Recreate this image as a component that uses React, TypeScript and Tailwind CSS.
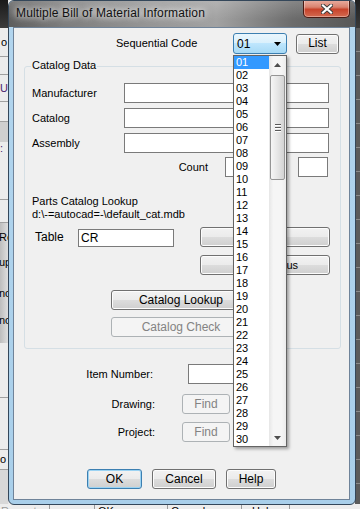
import React from "react";

const btnNormal =
  "border-[#707070] bg-[linear-gradient(#f2f2f2_0%,#ebebeb_50%,#dddddd_50%,#cfcfcf_100%)] shadow-[inset_0_0_0_1px_#fcfcfc] text-black";
const btnDefault =
  "border-[#3c7fb1] bg-[linear-gradient(#f2f2f2_0%,#ebebeb_50%,#dddddd_50%,#cfcfcf_100%)] shadow-[inset_0_0_0_1px_#9bd3f3] text-black";
const btnDisabled = "border-[#adb2b5] bg-[#f4f4f4] text-[#838383]";

function Btn({
  children,
  className = "",
  kind = "normal",
}: {
  children?: React.ReactNode;
  className?: string;
  kind?: "normal" | "default" | "disabled";
}) {
  const k = kind === "disabled" ? btnDisabled : kind === "default" ? btnDefault : btnNormal;
  return (
    <div className={`flex shrink-0 items-center justify-center rounded-[3px] border leading-[13px] ${k} ${className}`}>
      {children}
    </div>
  );
}

function TextBox({ className = "", children }: { className?: string; children?: React.ReactNode }) {
  return (
    <div className={`flex shrink-0 items-center border border-[#7a7a7a] bg-white pl-[2px] text-[12px] leading-[14px] ${className}`}>
      {children}
    </div>
  );
}

function LeftStrip() {
  return (
    <div className="absolute left-0 top-0 flex h-[509px] w-[8px] flex-col overflow-hidden bg-[#ececec] text-[11px] leading-[13px]">
      <div className="h-[28px] shrink-0 bg-[linear-gradient(#1a1a1a,#3c3c3c)]" />
      <div className="flex h-[29px] shrink-0 items-center border-b border-[#a0a0a0] pl-[1px]">o</div>
      <div className="h-[18px] shrink-0 border-b border-[#a0a0a0]" />
      <div className="flex h-[27px] shrink-0 items-center border-b border-[#a0a0a0] text-[#4b1f6f]">U</div>
      <div className="h-[20px] shrink-0 border-b border-[#a0a0a0]" />
      <div className="h-[20px] shrink-0 bg-[#cfcfcf]" />
      <div className="h-[58px] shrink-0 border-b border-[#a0a0a0] text-[#4b1f6f]">:</div>
      <div className="h-[23px] shrink-0 border-b border-[#a0a0a0]" />
      <div className="flex h-[120px] shrink-0 flex-col bg-[linear-gradient(90deg,#bdbdbd,#dedede)] text-black">
        <div className="mt-[8px] -ml-[1px] leading-[13px]">Re</div>
        <div className="mt-[12px] -ml-[1px] leading-[13px]">up</div>
        <div className="mt-[18px] -ml-[1px] leading-[13px]">nc</div>
        <div className="mt-[14px] -ml-[1px] leading-[13px]">nc</div>
      </div>
      <div className="h-[55px] shrink-0 border-b border-[#a0a0a0]" />
      <div className="h-[52px] shrink-0 border-b border-[#a0a0a0]" />
      <div className="flex h-[20px] shrink-0 items-center border-b border-[#a0a0a0]">o</div>
      <div className="flex-1 bg-[#d8d8d8]" />
    </div>
  );
}

function RightStrip() {
  return (
    <div className="absolute right-0 top-0 flex h-[509px] w-[5px] flex-col overflow-hidden">
      <div className="h-[28px] shrink-0 bg-[linear-gradient(#202020,#3a3a3a)]" />
      <div className="flex-1 bg-[repeating-linear-gradient(180deg,#5b5b5b_0px,#5b5b5b_23px,#8a8a8a_23px,#8a8a8a_24px)]" />
    </div>
  );
}

function BottomStrip() {
  return (
    <div className="absolute bottom-0 left-0 flex h-[5px] w-[360px] overflow-hidden bg-[#ededed] text-[11px] leading-[13px]">
      <div className="w-[50px] shrink-0 border-r border-[#9a9a9a] pl-[1px] pt-[1px] text-[#9a9a9a]">Repeat</div>
      <div className="w-[45px] shrink-0 border-r border-[#9a9a9a]" />
      <div className="w-[73px] shrink-0 border-r border-[#9a9a9a] pl-[3px] pt-[1px]">OK</div>
      <div className="w-[74px] shrink-0 border-r border-[#9a9a9a] pl-[3px] pt-[1px]">Cancel</div>
      <div className="w-[48px] shrink-0 border-r border-[#9a9a9a] pl-[10px] pt-[1px]">Help</div>
      <div className="flex-1" />
    </div>
  );
}

function DropList() {
  const rows = Array.from({ length: 30 }, (_, i) => String(i + 1).padStart(2, "0"));
  return (
    <div className="absolute left-[219px] top-[27px] z-10 flex h-[392px] w-[54px] border border-[#646464] bg-white shadow-[2px_2px_3px_rgba(0,0,0,0.35)]">
      <div className="flex w-[35px] shrink-0 flex-col">
        {rows.map((r, i) => (
          <div
            key={r}
            className={`h-[13px] shrink-0 pl-[2px] text-[11px] leading-[13px] ${i === 0 ? "bg-[#3399ff] text-white" : "text-black"}`}
          >
            {r}
          </div>
        ))}
      </div>
      <div className="flex w-[17px] shrink-0 flex-col bg-[linear-gradient(90deg,#e6e6e6,#f5f5f5_25%,#f5f5f5_75%,#ebebeb)]">
        <div className="flex h-[17px] shrink-0 items-center justify-center">
          <svg width="7" height="4" viewBox="0 0 7 4">
            <polygon points="0,4 7,4 3.5,0" fill="#4d4d4d" />
          </svg>
        </div>
        <div className="ml-[1px] mt-[2px] flex h-[105px] w-[15px] shrink-0 flex-col items-center justify-center gap-[1px] rounded-[2px] border border-[#959595] bg-[linear-gradient(90deg,#f6f6f6,#e6e6e6_50%,#d3d3d3)]">
          <div className="h-[1px] w-[6px] bg-[#5a5a5a] shadow-[0_1px_0_#ffffff]" />
          <div className="mt-[1px] h-[1px] w-[6px] bg-[#5a5a5a] shadow-[0_1px_0_#ffffff]" />
          <div className="mt-[1px] h-[1px] w-[6px] bg-[#5a5a5a] shadow-[0_1px_0_#ffffff]" />
        </div>
        <div className="flex-1" />
        <div className="flex h-[17px] shrink-0 items-center justify-center">
          <svg width="7" height="4" viewBox="0 0 7 4">
            <polygon points="0,0 7,0 3.5,4" fill="#4d4d4d" />
          </svg>
        </div>
      </div>
    </div>
  );
}

export default function App() {
  return (
    <div className="relative h-[509px] w-[360px] overflow-hidden bg-[#e9e9e9] font-['Liberation_Sans',Arial,sans-serif] text-[11px] text-black">
      <LeftStrip />
      <RightStrip />
      <BottomStrip />

      {/* Dialog window */}
      <div className="absolute left-[8px] top-0 flex h-[505px] w-[348px] flex-col overflow-hidden rounded-[6px] border border-[#34475a] bg-[linear-gradient(180deg,#b2d5ee,#a9cfea)]">
        {/* Title bar */}
        <div className="flex h-[26px] shrink-0 items-start bg-[linear-gradient(180deg,rgba(255,255,255,0.18),rgba(255,255,255,0)_70%),linear-gradient(90deg,#5e5e5e_0%,#7c7c7c_15%,#959595_40%,#a2a2a2_60%,#6c6c6c_82%,#585858_100%)]">
          <div className="ml-[7px] mt-[5px] text-[12px] leading-[14px] tracking-[0.15px] text-[#111] [text-shadow:0_0_6px_#ffffff,0_0_10px_rgba(255,255,255,0.8)]">
            Multiple Bill of Material Information
          </div>
          <div className="-mt-[1px] ml-auto mr-[5px] flex h-[18px] w-[47px] items-center justify-center rounded-b-[5px] border border-t-0 border-[#4a1a12] bg-[linear-gradient(180deg,#eab0a3_0%,#d9826f_42%,#c8432b_55%,#d36a50_100%)] shadow-[inset_0_0_0_1px_rgba(255,255,255,0.35)]">
            <svg width="12" height="10" viewBox="0 0 12 10">
              <path d="M2 1.5 L10 8.5 M10 1.5 L2 8.5" stroke="#3b3b3b" strokeWidth="4" strokeLinecap="square" />
              <path d="M2 1.5 L10 8.5 M10 1.5 L2 8.5" stroke="#ffffff" strokeWidth="2.2" strokeLinecap="square" />
            </svg>
          </div>
        </div>

        {/* Frame + client */}
        <div className="flex flex-1 pb-[4px] pl-[4px] pr-[5px]">
          <div className="relative flex w-[337px] flex-col border border-[#6f8399] bg-[#f0f0f0]">
            {/* Sequential code row */}
            <div className="mt-[5px] flex h-[21px] items-center">
              <div className="w-[219px] shrink-0 pl-[102px] leading-[13px]">Sequential Code</div>
              <div className="flex h-[21px] w-[54px] shrink-0 items-center rounded-[3px] border border-[#3c7fb1] bg-[linear-gradient(#eaf6fd_0%,#d9f0fc_50%,#bee6fd_50%,#a7d9f5_100%)] pl-[3px] text-[12px] leading-[14px]">
                <span>01</span>
                <svg className="ml-auto mr-[5px]" width="7" height="4" viewBox="0 0 7 4">
                  <polygon points="0,0 7,0 3.5,4" fill="#000000" />
                </svg>
              </div>
              <Btn className="ml-[9px] h-[20px] w-[43px] text-[12px]">List</Btn>
            </div>

            {/* Catalog Data group */}
            <div className="relative ml-[10px] mt-[12px] flex h-[283px] w-[317px] shrink-0 flex-col rounded-[3px] border border-[#d5dfe5]">
              <div className="absolute left-[6px] top-[-8px] bg-[#f0f0f0] px-[1px] leading-[13px]">Catalog Data</div>

              <div className="mt-[16px] flex h-[20px] items-center">
                <div className="w-[99px] shrink-0 pl-[7px] leading-[13px]">Manufacturer</div>
                <TextBox className="h-[20px] w-[205px]" />
              </div>
              <div className="mt-[5px] flex h-[20px] items-center">
                <div className="w-[99px] shrink-0 pl-[7px] leading-[13px]">Catalog</div>
                <TextBox className="h-[20px] w-[205px]" />
              </div>
              <div className="mt-[5px] flex h-[20px] items-center">
                <div className="w-[99px] shrink-0 pl-[7px] leading-[13px]">Assembly</div>
                <TextBox className="h-[20px] w-[205px]" />
              </div>
              <div className="mt-[4px] flex h-[20px] items-center">
                <div className="w-[200px] shrink-0 pr-[17px] text-right leading-[13px]">Count</div>
                <TextBox className="h-[20px] w-[58px]" />
                <TextBox className="ml-[15px] h-[20px] w-[30px]" />
              </div>

              <div className="mt-[18px] pl-[7px] leading-[13px]">
                <div>Parts Catalog Lookup</div>
                <div>d:\-=autocad=-\default_cat.mdb</div>
              </div>

              <div className="mt-[6px] flex h-[20px] items-start">
                <div className="flex h-[20px] w-[53px] shrink-0 items-center pl-[10px] text-[12px] leading-[14px]">Table</div>
                <TextBox className="mt-[2px] h-[18px] w-[96px]">CR</TextBox>
                <Btn className="ml-[26px] h-[20px] w-[130px]" />
              </div>
              <Btn className="ml-[175px] mt-[8px] h-[20px] w-[130px] justify-end pr-[31px]">Previous</Btn>
              <Btn className="ml-[86px] mt-[15px] h-[20px] w-[140px] text-[12px]">Catalog Lookup</Btn>
              <Btn kind="disabled" className="ml-[86px] mt-[7px] h-[20px] w-[140px] text-[12px]">Catalog Check</Btn>
            </div>

            {/* Item number etc */}
            <div className="mt-[15px] flex h-[20px] items-center">
              <div className="w-[139px] shrink-0 text-right leading-[13px]">Item Number:</div>
              <TextBox className="ml-[35px] h-[20px] w-[80px]" />
            </div>
            <div className="mt-[10px] flex h-[20px] items-center">
              <div className="w-[141px] shrink-0 text-right leading-[13px]">Drawing:</div>
              <Btn kind="disabled" className="ml-[27px] h-[20px] w-[48px] text-[12px]">Find</Btn>
            </div>
            <div className="mt-[8px] flex h-[20px] items-center">
              <div className="w-[141px] shrink-0 text-right leading-[13px]">Project:</div>
              <Btn kind="disabled" className="ml-[27px] h-[20px] w-[48px] text-[12px]">Find</Btn>
            </div>

            <div className="mt-[27px] flex h-[20px] items-center">
              <Btn kind="default" className="ml-[73px] h-[20px] w-[55px] text-[12px]">OK</Btn>
              <Btn className="ml-[10px] h-[20px] w-[64px] text-[12px]">Cancel</Btn>
              <Btn className="ml-[10px] h-[20px] w-[50px] text-[12px]">Help</Btn>
            </div>

            <DropList />
          </div>
        </div>
      </div>
    </div>
  );
}
